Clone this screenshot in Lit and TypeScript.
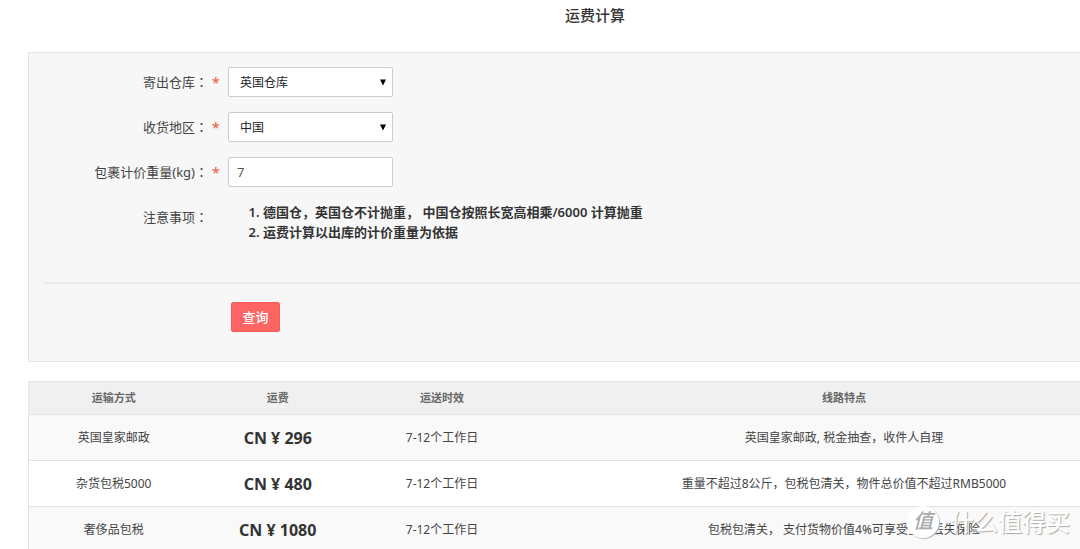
import { LitElement, html, css } from "lit";
import { customElement, state } from "lit/decorators.js";

interface Route {
  name: string;
  fee: string;
  time: string;
  note: string;
}

const ROUTES: Route[] = [
  { name: "英国皇家邮政", fee: "CN ¥ 296", time: "7-12个工作日", note: "英国皇家邮政, 税金抽查，收件人自理" },
  { name: "杂货包税5000", fee: "CN ¥ 480", time: "7-12个工作日", note: "重量不超过8公斤，包税包清关，物件总价值不超过RMB5000" },
  { name: "奢侈品包税", fee: "CN ¥ 1080", time: "7-12个工作日", note: "包税包清关， 支付货物价值4%可享受全赔丢失保险" },
];

@customElement("app-root")
export class AppRoot extends LitElement {
  static styles = css`
    :host {
      display: block;
      height: 100vh;
      overflow: hidden;
      position: relative;
      background: #fff;
      color: #444;
      font-family: "Noto Sans", "Noto Sans CJK SC", sans-serif;
      font-size: 13px;
      line-height: 20px;
    }
    * {
      box-sizing: border-box;
    }
    .page {
      margin: 0 -82px 0 28px;
    }
    .title {
      margin: 0;
      padding: 5px 0 27px;
      font-size: 15px;
      line-height: 20px;
      font-weight: 500;
      text-align: center;
      color: #333;
    }
    .panel {
      display: flex;
      flex-direction: column;
      gap: 15px;
      padding: 14px;
      border: 1px solid #e5e5e5;
      background: #f7f7f7;
    }
    .row {
      display: grid;
      grid-template-columns: 165px 20px 1fr;
      align-items: start;
    }
    .label {
      text-align: right;
      line-height: 30px;
      height: 30px;
    }
    .colon {
      font-family: "Noto Sans CJK TC", sans-serif;
    }
    .star {
      padding-left: 4px;
      color: #f0573c;
      font-size: 14px;
      line-height: 32px;
      height: 30px;
    }
    .field {
      display: block;
      width: 165px;
      height: 30px;
      margin: 0;
      border: 1px solid #ccc;
      border-radius: 2px;
      background: #fff;
      color: #222;
      font-family: inherit;
      font-size: 12px;
      line-height: 20px;
      outline: none;
    }
    .select {
      appearance: none;
      padding: 2px 24px 0 11px;
    }
    .text {
      padding: 0 8px;
      color: #555;
      font-size: 13px;
    }
    .pick {
      display: grid;
      width: 165px;
      align-items: center;
    }
    .pick > * {
      grid-area: 1 / 1;
    }
    .arrow {
      justify-self: end;
      margin-right: 7px;
      pointer-events: none;
    }
    .notes {
      margin: 0;
      padding: 0 0 0 35px;
      color: #333;
      font-weight: 600;
    }
    .actions {
      margin-top: 25px;
      padding: 18px 0 15px 188px;
      border-top: 2px solid #ebebeb;
    }
    .submit {
      display: block;
      width: 49px;
      height: 30px;
      padding: 0;
      border: 1px solid #fb5a5a;
      border-radius: 2px;
      background: #ff6464;
      color: #fff;
      font-family: inherit;
      font-size: 13px;
      font-weight: 500;
      line-height: 20px;
    }
    .table {
      width: 100%;
      margin-top: 19px;
      table-layout: fixed;
      border-collapse: collapse;
      border: 1px solid #e5e5e5;
      font-size: 12px;
      text-align: center;
    }
    .c1,
    .c3 {
      width: 15%;
    }
    .c2 {
      width: 14%;
    }
    .th {
      height: 33px;
      padding: 0;
      background: #f0f0f0;
      border-bottom: 1px solid #e2e2e2;
      color: #666;
      font-size: 11px;
      font-weight: 700;
    }
    .td {
      height: 46px;
      padding: 0;
      border-bottom: 1px solid #e2e2e2;
    }
    .line:nth-child(odd) {
      background: #f9f9f9;
    }
    .fee {
      color: #333;
      font-size: 16px;
      font-weight: 700;
    }
    .mark {
      position: absolute;
      right: 10px;
      bottom: 11px;
      display: flex;
      align-items: center;
      gap: 11px;
      color: #fff;
      font-size: 24px;
      font-weight: 500;
      line-height: 32px;
      text-shadow: 1px 1px 1px #aaa;
      pointer-events: none;
    }
    .seal {
      width: 32px;
      height: 32px;
      border-radius: 50%;
      background: #fff;
      box-shadow: 1px 1px 1px #bbb;
      color: #aaa;
      font-size: 20px;
      font-style: italic;
      line-height: 30px;
      text-align: center;
      text-shadow: none;
    }
  `;

  @state() private weight = "7";

  private arrow() {
    return html`<svg class="arrow" width="6" height="7" viewBox="0 0 6 7" aria-hidden="true">
      <path d="M0 0.5H6L3 6.5Z" fill="#000" />
    </svg>`;
  }

  private label(id: string, text: string) {
    return html`<label class="label" for=${id}>${text}<span class="colon">：</span></label><span class="star">*</span>`;
  }

  render() {
    return html`
      <main class="page">
        <h1 class="title">运费计算</h1>
        <form class="panel" @submit=${(e: Event) => e.preventDefault()}>
          <div class="row">
            ${this.label("from", "寄出仓库")}
            <div class="pick">
              <select id="from" class="field select"><option>英国仓库</option></select>
              ${this.arrow()}
            </div>
          </div>
          <div class="row">
            ${this.label("to", "收货地区")}
            <div class="pick">
              <select id="to" class="field select"><option>中国</option></select>
              ${this.arrow()}
            </div>
          </div>
          <div class="row">
            ${this.label("weight", "包裹计价重量(kg)")}
            <input
              id="weight"
              class="field text"
              type="text"
              .value=${this.weight}
              @input=${(e: Event) => (this.weight = (e.target as HTMLInputElement).value)}
            />
          </div>
          <div class="row">
            <span class="label">注意事项<span class="colon">：</span></span>
            <span></span>
            <ol class="notes">
              <li>德国仓，英国仓不计抛重， 中国仓按照长宽高相乘/6000 计算抛重</li>
              <li>运费计算以出库的计价重量为依据</li>
            </ol>
          </div>
          <div class="actions"><button class="submit" type="submit">查询</button></div>
        </form>
        <table class="table">
          <thead>
            <tr>
              <th class="th c1">运输方式</th>
              <th class="th c2">运费</th>
              <th class="th c3">运送时效</th>
              <th class="th">线路特点</th>
            </tr>
          </thead>
          <tbody>
            ${ROUTES.map(
              (r) => html`<tr class="line">
                <td class="td">${r.name}</td>
                <td class="td fee">${r.fee}</td>
                <td class="td">${r.time}</td>
                <td class="td">${r.note}</td>
              </tr>`
            )}
          </tbody>
        </table>
      </main>
      <div class="mark"><span class="seal">值</span><span>什么值得买</span></div>
    `;
  }
}
